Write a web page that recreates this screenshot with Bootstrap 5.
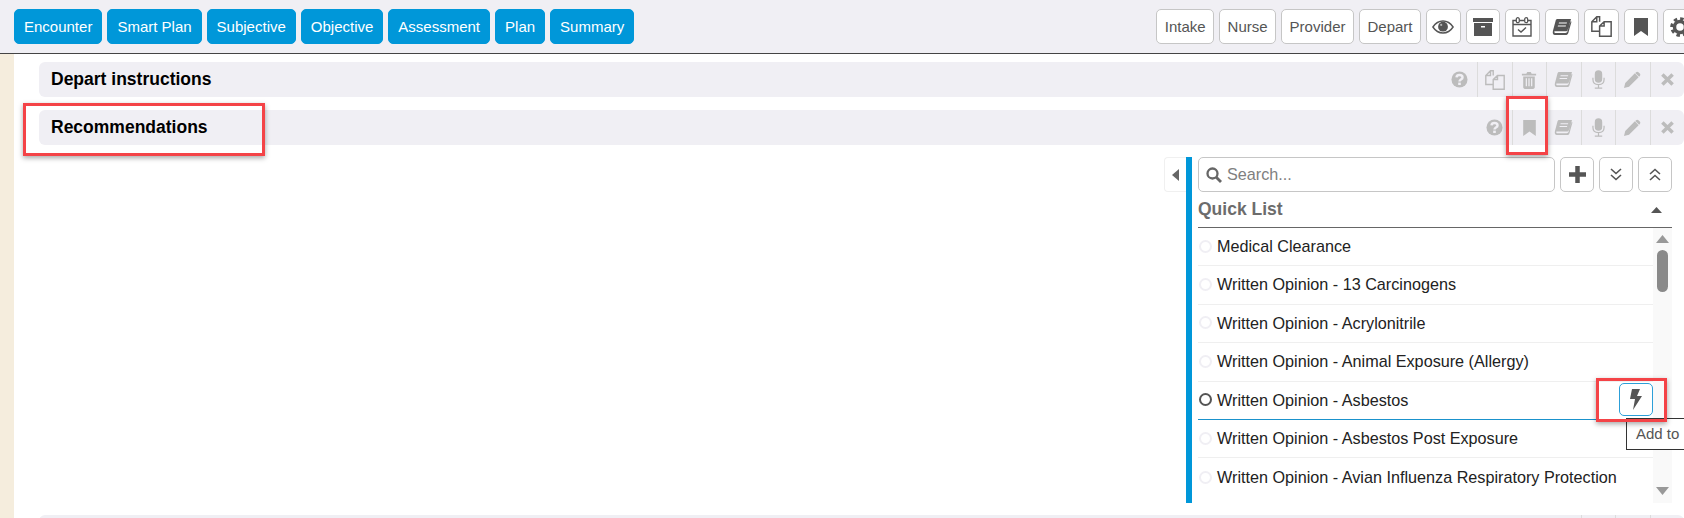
<!DOCTYPE html>
<html lang="en">
<head>
  <meta charset="UTF-8">
  <title>Recommendations</title>
  <link rel="stylesheet" href="https://cdn.jsdelivr.net/npm/bootstrap@5.3.0/dist/css/bootstrap.min.css">
  <style>
    html, body { height: 100%; overflow: hidden; }
    body { font-family: "Liberation Sans", Arial, sans-serif; color: #111; background: #fff; }
    svg { display: block; }

    /* top toolbar */
    .top-bar { height: 54px; padding: 9px 0 0 14px; background: #f0eff4; border-bottom: 1px solid #444; }
    .top-bar .btn { height: 35px; padding: 0 7.5px; font-size: 15px; line-height: 33px; border-radius: 5px; white-space: nowrap; }
    .gap-5px { gap: 5px; }
    .btn-step { background: #0097d9; border: 1px solid #0097d9; color: #fff; padding: 0 9px !important; }
    .btn-view { background: #fff; border: 1px solid #c6c6c6; color: #555; }
    .btn-icon { width: 34.5px; padding: 0 !important; display: flex; align-items: center; justify-content: center; color: #555; }
    .right-tools { margin-right: -13.5px; }

    /* page body */
    .page-main { height: 464px; overflow: hidden; }
    .left-strip { width: 14px; background: #f5eddd; flex: none; }
    .work-area { padding: 8px 0 0 25px; min-width: 0; }
    .sect-bar { height: 35px; background: #f0eff4; border-radius: 6px; margin-bottom: 13px; padding-left: 12px; }
    .sect-title { font-size: 17.5px; font-weight: 700; color: #000; }
    .sect-cell { width: 34.5px; height: 35px; display: flex; align-items: center; justify-content: center; color: #bcbcbc; border-left: 1px solid #dcdcdc; }
    .sect-cell.plain { border-left: 0; }

    /* quick list panel */
    .rec-panel { width: 508px; height: 346px; margin: 12px 12px 12px auto; }
    .side-toggle { width: 22px; height: 35px; flex: none; background: #fff; border: 1px solid #f0f0f0; border-right: 0; border-radius: 4px 0 0 4px; color: #666; display: flex; align-items: center; justify-content: center; }
    .pick-pane { border-left: 6px solid #0097d9; padding-left: 6px; min-width: 0; }
    .search-box { height: 35px; border: 1px solid #c6c6c6; border-radius: 5px; padding: 0 7px; gap: 5px; }
    .search-box input { border: 0; outline: 0; padding: 0; width: 100%; font-size: 16.2px; color: #333; background: transparent; }
    .search-box input::placeholder { color: #808080; opacity: 1; }
    .search-glyph { flex: none; }
    .pane-btn { width: 34px; height: 35px; flex: none; padding: 0; background: #fff; border: 1px solid #c6c6c6; border-radius: 5px; color: #555; display: flex; align-items: center; justify-content: center; }
    .list-head { height: 36px; border-bottom: 1px solid #666; padding-right: 10px; color: #6c6c6c; }
    .list-title { font-size: 17.5px; font-weight: 700; }
    .list-wrap { height: 275px; }
    .quick-rows { overflow: hidden; min-width: 0; }
    .quick-rows .list-group-item { height: 38.4px; flex: none; padding: 0 0 1px 1px; font-size: 16.2px; color: #222; border-bottom: 1px solid #efefef; gap: 5px; }
    .quick-rows .list-group-item.row-hover { border-bottom: 1px solid #1a92cc; }
    .row-dot { width: 13px; height: 13px; flex: none; border: 2px solid #f0eff4; border-radius: 50%; }
    .row-hover .row-dot { border-color: #555; }
    .bolt-btn { width: 34px; height: 33px; padding: 0; border: 1px solid #2c9fd8; border-radius: 5px; background: #fff; color: #555; display: flex; align-items: center; justify-content: center; }
    .fake-scroll { width: 19px; flex: none; background: #f9f9f9; color: #999; padding: 7px 0 8px; }
    .scroll-thumb { width: 11px; height: 42px; margin-top: 7px; background: #8a8a8a; border-radius: 6px; }

    /* overlays */
    .hint-box { position: absolute; border: 3px solid #f44347; box-shadow: 0 2px 5px rgba(0, 0, 0, .35); pointer-events: none; }
    .hint-title { left: 23px; top: 103px; width: 242px; height: 53px; }
    .hint-mark { left: 1506px; top: 96px; width: 42px; height: 59px; }
    .hint-bolt { left: 1596px; top: 378px; width: 71px; height: 44px; }
    .add-tip { position: absolute; left: 1626px; top: 418px; width: 58px; height: 32px; padding-left: 9px; background: #fff; border: 1px solid #333; border-right: 0; font-size: 15px; line-height: 30px; color: #555; white-space: nowrap; overflow: hidden; }
  </style>
</head>
<body>
  <svg width="0" height="0" class="position-absolute">
    <symbol id="i-book" viewBox="0 0 20 18"><path fill="currentColor" d="M5.5 1H19l-3.6 12.6c-.3 1-1 1.4-2 1.4H3.2c-.9 0-1-1-.7-1.7h11.6c.8 0 1.2-.3 1.4-1L18.700 3.200 19.500 3.700 16.400 14.700c-.4 1.600-1.400 2.300-3 2.300H3C1 17 .4 15 .9 13L3.700 2.500C4 1.500 4.600 1 5.500 1zM7 4.500l-.3 1h8l.3-1zM6 7.500l-.3 1h8l.3-1z" fill-rule="evenodd"/></symbol>
    <symbol id="i-copy" viewBox="0 0 20 20"><path fill="none" stroke="currentColor" stroke-width="1.400" d="M8.200 5.500V.8H5.500L.8 5.500v9h7.400M5.500.8v4.700H.8M8.200 9.500l4.300-4h6.700v13.700h-11zM12.500 5.500v4h-4.300"/></symbol>
    <symbol id="i-mark" viewBox="0 0 16 20"><path fill="currentColor" d="M1 1h14v18l-7-5-7 5z"/></symbol>
    <symbol id="i-help" viewBox="0 0 18 18"><circle cx="9" cy="9" r="8.500" fill="currentColor"/><path fill="none" stroke="#f0eff4" stroke-width="2.600" d="M5.800 6.800C6 5 7.300 4.300 9 4.300c1.800 0 3.200 1 3.200 2.500 0 2.300-3.200 2.200-3.200 4.300"/><rect x="7.600" y="12.300" width="2.800" height="2.500" fill="#f0eff4"/></symbol>
    <symbol id="i-trash" viewBox="0 0 18 20"><path fill="currentColor" fill-rule="evenodd" d="M6 3l1-2h4l1 2h5v2H1V3zM2.500 6h13v12c0 1-.6 2-1.600 2H4.100c-1 0-1.600-1-1.600-2zM5.300 8v9h1.400V8zM8.300 8v9h1.400V8zM11.300 8v9h1.400V8z"/></symbol>
    <symbol id="i-mic" viewBox="0 0 14 20"><rect x="3" y="0" width="8" height="13.500" rx="4" fill="currentColor"/><path fill="none" stroke="currentColor" stroke-width="1.300" d="M1 8v2c0 3.500 2.500 5.500 6 5.500s6-2 6-5.500V8M7 15.500v3M3 19.300h8"/></symbol>
    <symbol id="i-pencil" viewBox="0 0 18 18"><path fill="currentColor" d="M0 18l1.300-5.300L11.500 2.500l4 4L5.300 16.700zM12.500 1.500C13.500.5 14.500.5 15.300 1.300l1.400 1.400c.8.800.8 1.800-.2 2.800l-.5.500-4-4z"/></symbol>
    <symbol id="i-x" viewBox="0 0 14 14"><path fill="none" stroke="currentColor" stroke-width="3.800" d="M1.500 1.500l11 11M12.500 1.500l-11 11"/></symbol>
  </svg>

  <header class="top-bar d-flex align-items-start">
    <div class="d-flex gap-5px">
      <button class="btn btn-step" type="button">Encounter</button>
      <button class="btn btn-step" type="button">Smart Plan</button>
      <button class="btn btn-step" type="button">Subjective</button>
      <button class="btn btn-step" type="button">Objective</button>
      <button class="btn btn-step" type="button">Assessment</button>
      <button class="btn btn-step" type="button">Plan</button>
      <button class="btn btn-step" type="button">Summary</button>
    </div>
    <div class="d-flex gap-5px ms-auto right-tools">
      <button class="btn btn-view" type="button">Intake</button>
      <button class="btn btn-view" type="button">Nurse</button>
      <button class="btn btn-view" type="button">Provider</button>
      <button class="btn btn-view" type="button">Depart</button>
      <button class="btn btn-view btn-icon" type="button" aria-label="View">
        <svg width="22" height="14" viewBox="0 0 22 14"><path fill="none" stroke="currentColor" stroke-width="1.400" d="M.9 7C3.400 3.200 6.900 1 11 1s7.600 2.200 10.100 6c-2.500 3.800-6 6-10.100 6S3.400 10.800.9 7z"/><circle cx="11" cy="6.700" r="4.900" fill="currentColor"/><circle cx="9.200" cy="4.900" r="1.100" fill="#b5b5b5"/></svg>
      </button>
      <button class="btn btn-view btn-icon" type="button" aria-label="Archive">
        <svg width="20" height="18" viewBox="0 0 20 18"><path fill="currentColor" fill-rule="evenodd" d="M0 0h20v4H0zM1 5h18v13H1zM8 8v1.500h4V8z"/></svg>
      </button>
      <button class="btn btn-view btn-icon" type="button" aria-label="Calendar">
        <svg width="20" height="20" viewBox="0 0 20 20"><path fill="none" stroke="currentColor" stroke-width="1.400" d="M4 3.500H1V19h18V3.500h-3M8 3.500h4M1 7.500h18M6 12.500l3 2.500 5-4.500"/><rect x="4.300" y=".7" width="3" height="5" rx="1.500" fill="none" stroke="currentColor" stroke-width="1.300"/><rect x="12.700" y=".7" width="3" height="5" rx="1.500" fill="none" stroke="currentColor" stroke-width="1.300"/></svg>
      </button>
      <button class="btn btn-view btn-icon" type="button" aria-label="Book">
        <svg width="20" height="18"><use href="#i-book"/></svg>
      </button>
      <button class="btn btn-view btn-icon" type="button" aria-label="Copy">
        <svg width="21" height="21"><use href="#i-copy"/></svg>
      </button>
      <button class="btn btn-view btn-icon" type="button" aria-label="Bookmark">
        <svg width="16" height="20"><use href="#i-mark"/></svg>
      </button>
      <button class="btn btn-view btn-icon" type="button" aria-label="Settings">
        <svg width="20" height="20" viewBox="0 0 20 20"><circle cx="10" cy="10" r="5.500" fill="none" stroke="currentColor" stroke-width="3.500"/><circle cx="10" cy="10" r="8.300" fill="none" stroke="currentColor" stroke-width="3" stroke-dasharray="3.500 3"/></svg>
      </button>
    </div>
  </header>

  <main class="page-main d-flex">
    <div class="left-strip"></div>
    <div class="work-area flex-grow-1">
      <section class="sect-bar d-flex align-items-center">
        <div class="sect-title me-auto">Depart instructions</div>
        <div class="sect-cell plain"><svg width="17" height="17"><use href="#i-help"/></svg></div>
        <div class="sect-cell"><svg width="20" height="20"><use href="#i-copy"/></svg></div>
        <div class="sect-cell"><svg width="16" height="18"><use href="#i-trash"/></svg></div>
        <div class="sect-cell"><svg width="19" height="17"><use href="#i-book"/></svg></div>
        <div class="sect-cell"><svg width="13" height="19"><use href="#i-mic"/></svg></div>
        <div class="sect-cell"><svg width="17" height="17"><use href="#i-pencil"/></svg></div>
        <div class="sect-cell"><svg width="13" height="13"><use href="#i-x"/></svg></div>
      </section>

      <section class="sect-bar d-flex align-items-center mb-0">
        <div class="sect-title me-auto">Recommendations</div>
        <div class="sect-cell plain"><svg width="17" height="17"><use href="#i-help"/></svg></div>
        <div class="sect-cell"><svg width="15" height="18"><use href="#i-mark"/></svg></div>
        <div class="sect-cell"><svg width="19" height="17"><use href="#i-book"/></svg></div>
        <div class="sect-cell"><svg width="13" height="19"><use href="#i-mic"/></svg></div>
        <div class="sect-cell"><svg width="17" height="17"><use href="#i-pencil"/></svg></div>
        <div class="sect-cell"><svg width="13" height="13"><use href="#i-x"/></svg></div>
      </section>

      <div class="rec-panel d-flex">
        <button class="side-toggle p-0" type="button" aria-label="Collapse">
          <svg width="7" height="12" viewBox="0 0 7 12"><path fill="currentColor" d="M7 0v12L0 6z"/></svg>
        </button>
        <div class="pick-pane flex-grow-1">
          <div class="d-flex gap-5px">
            <div class="search-box d-flex align-items-center flex-grow-1">
              <svg width="16" height="16" viewBox="0 0 16 16" class="search-glyph"><circle cx="6.500" cy="6.500" r="5" fill="none" stroke="#666" stroke-width="2.300"/><path stroke="#666" stroke-width="2.800" d="M10 10l5 5"/></svg>
              <input type="text" placeholder="Search...">
            </div>
            <button class="pane-btn" type="button" aria-label="Add">
              <svg width="17" height="17" viewBox="0 0 17 17"><path stroke="currentColor" stroke-width="4.500" d="M8.500 0v17M0 8.500h17"/></svg>
            </button>
            <button class="pane-btn" type="button" aria-label="Expand all">
              <svg width="14" height="13" viewBox="0 0 14 13"><path fill="none" stroke="currentColor" stroke-width="1.600" d="M2 1l5 4.500L12 1M2 7l5 4.500L12 7"/></svg>
            </button>
            <button class="pane-btn" type="button" aria-label="Collapse all">
              <svg width="14" height="13" viewBox="0 0 14 13"><path fill="none" stroke="currentColor" stroke-width="1.600" d="M2 6l5-4.500L12 6M2 12l5-4.500L12 12"/></svg>
            </button>
          </div>
          <div class="list-head d-flex align-items-center justify-content-between">
            <span class="list-title">Quick List</span>
            <svg width="11" height="6" viewBox="0 0 11 6"><path fill="#555" d="M0 6L5.500 0 11 6z"/></svg>
          </div>
          <div class="list-wrap d-flex">
            <ul class="quick-rows list-group list-group-flush flex-grow-1">
              <li class="list-group-item d-flex align-items-center"><span class="row-dot"></span>Medical Clearance</li>
              <li class="list-group-item d-flex align-items-center"><span class="row-dot"></span>Written Opinion - 13 Carcinogens</li>
              <li class="list-group-item d-flex align-items-center"><span class="row-dot"></span>Written Opinion - Acrylonitrile</li>
              <li class="list-group-item d-flex align-items-center"><span class="row-dot"></span>Written Opinion - Animal Exposure (Allergy)</li>
              <li class="list-group-item row-hover d-flex align-items-center"><span class="row-dot"></span>Written Opinion - Asbestos
                <button class="bolt-btn ms-auto" type="button" aria-label="Add to Quick List">
                  <svg width="12" height="21" viewBox="0 0 12 21"><path fill="currentColor" d="M2 0h8L7 7h5L3 21l2-11H0z"/></svg>
                </button>
              </li>
              <li class="list-group-item d-flex align-items-center"><span class="row-dot"></span>Written Opinion - Asbestos Post Exposure</li>
              <li class="list-group-item d-flex align-items-center"><span class="row-dot"></span>Written Opinion - Avian Influenza Respiratory Protection</li>
            </ul>
            <div class="fake-scroll d-flex flex-column align-items-center">
              <svg width="13" height="8" viewBox="0 0 13 8"><path fill="currentColor" d="M0 8L6.500 0 13 8z"/></svg>
              <div class="scroll-thumb"></div>
              <svg width="13" height="8" viewBox="0 0 13 8" class="mt-auto"><path fill="currentColor" d="M0 0h13L6.500 8z"/></svg>
            </div>
          </div>
        </div>
      </div>

      <section class="sect-bar d-flex align-items-center">
        <div class="sect-title me-auto"></div>
        <div class="sect-cell"></div>
        <div class="sect-cell"></div>
        <div class="sect-cell"></div>
      </section>
    </div>
  </main>

  <div class="add-tip">Add to</div>
  <div class="hint-box hint-title"></div>
  <div class="hint-box hint-mark"></div>
  <div class="hint-box hint-bolt"></div>

  <script src="https://cdn.jsdelivr.net/npm/bootstrap@5.3.0/dist/js/bootstrap.bundle.min.js"></script>
</body>
</html>
